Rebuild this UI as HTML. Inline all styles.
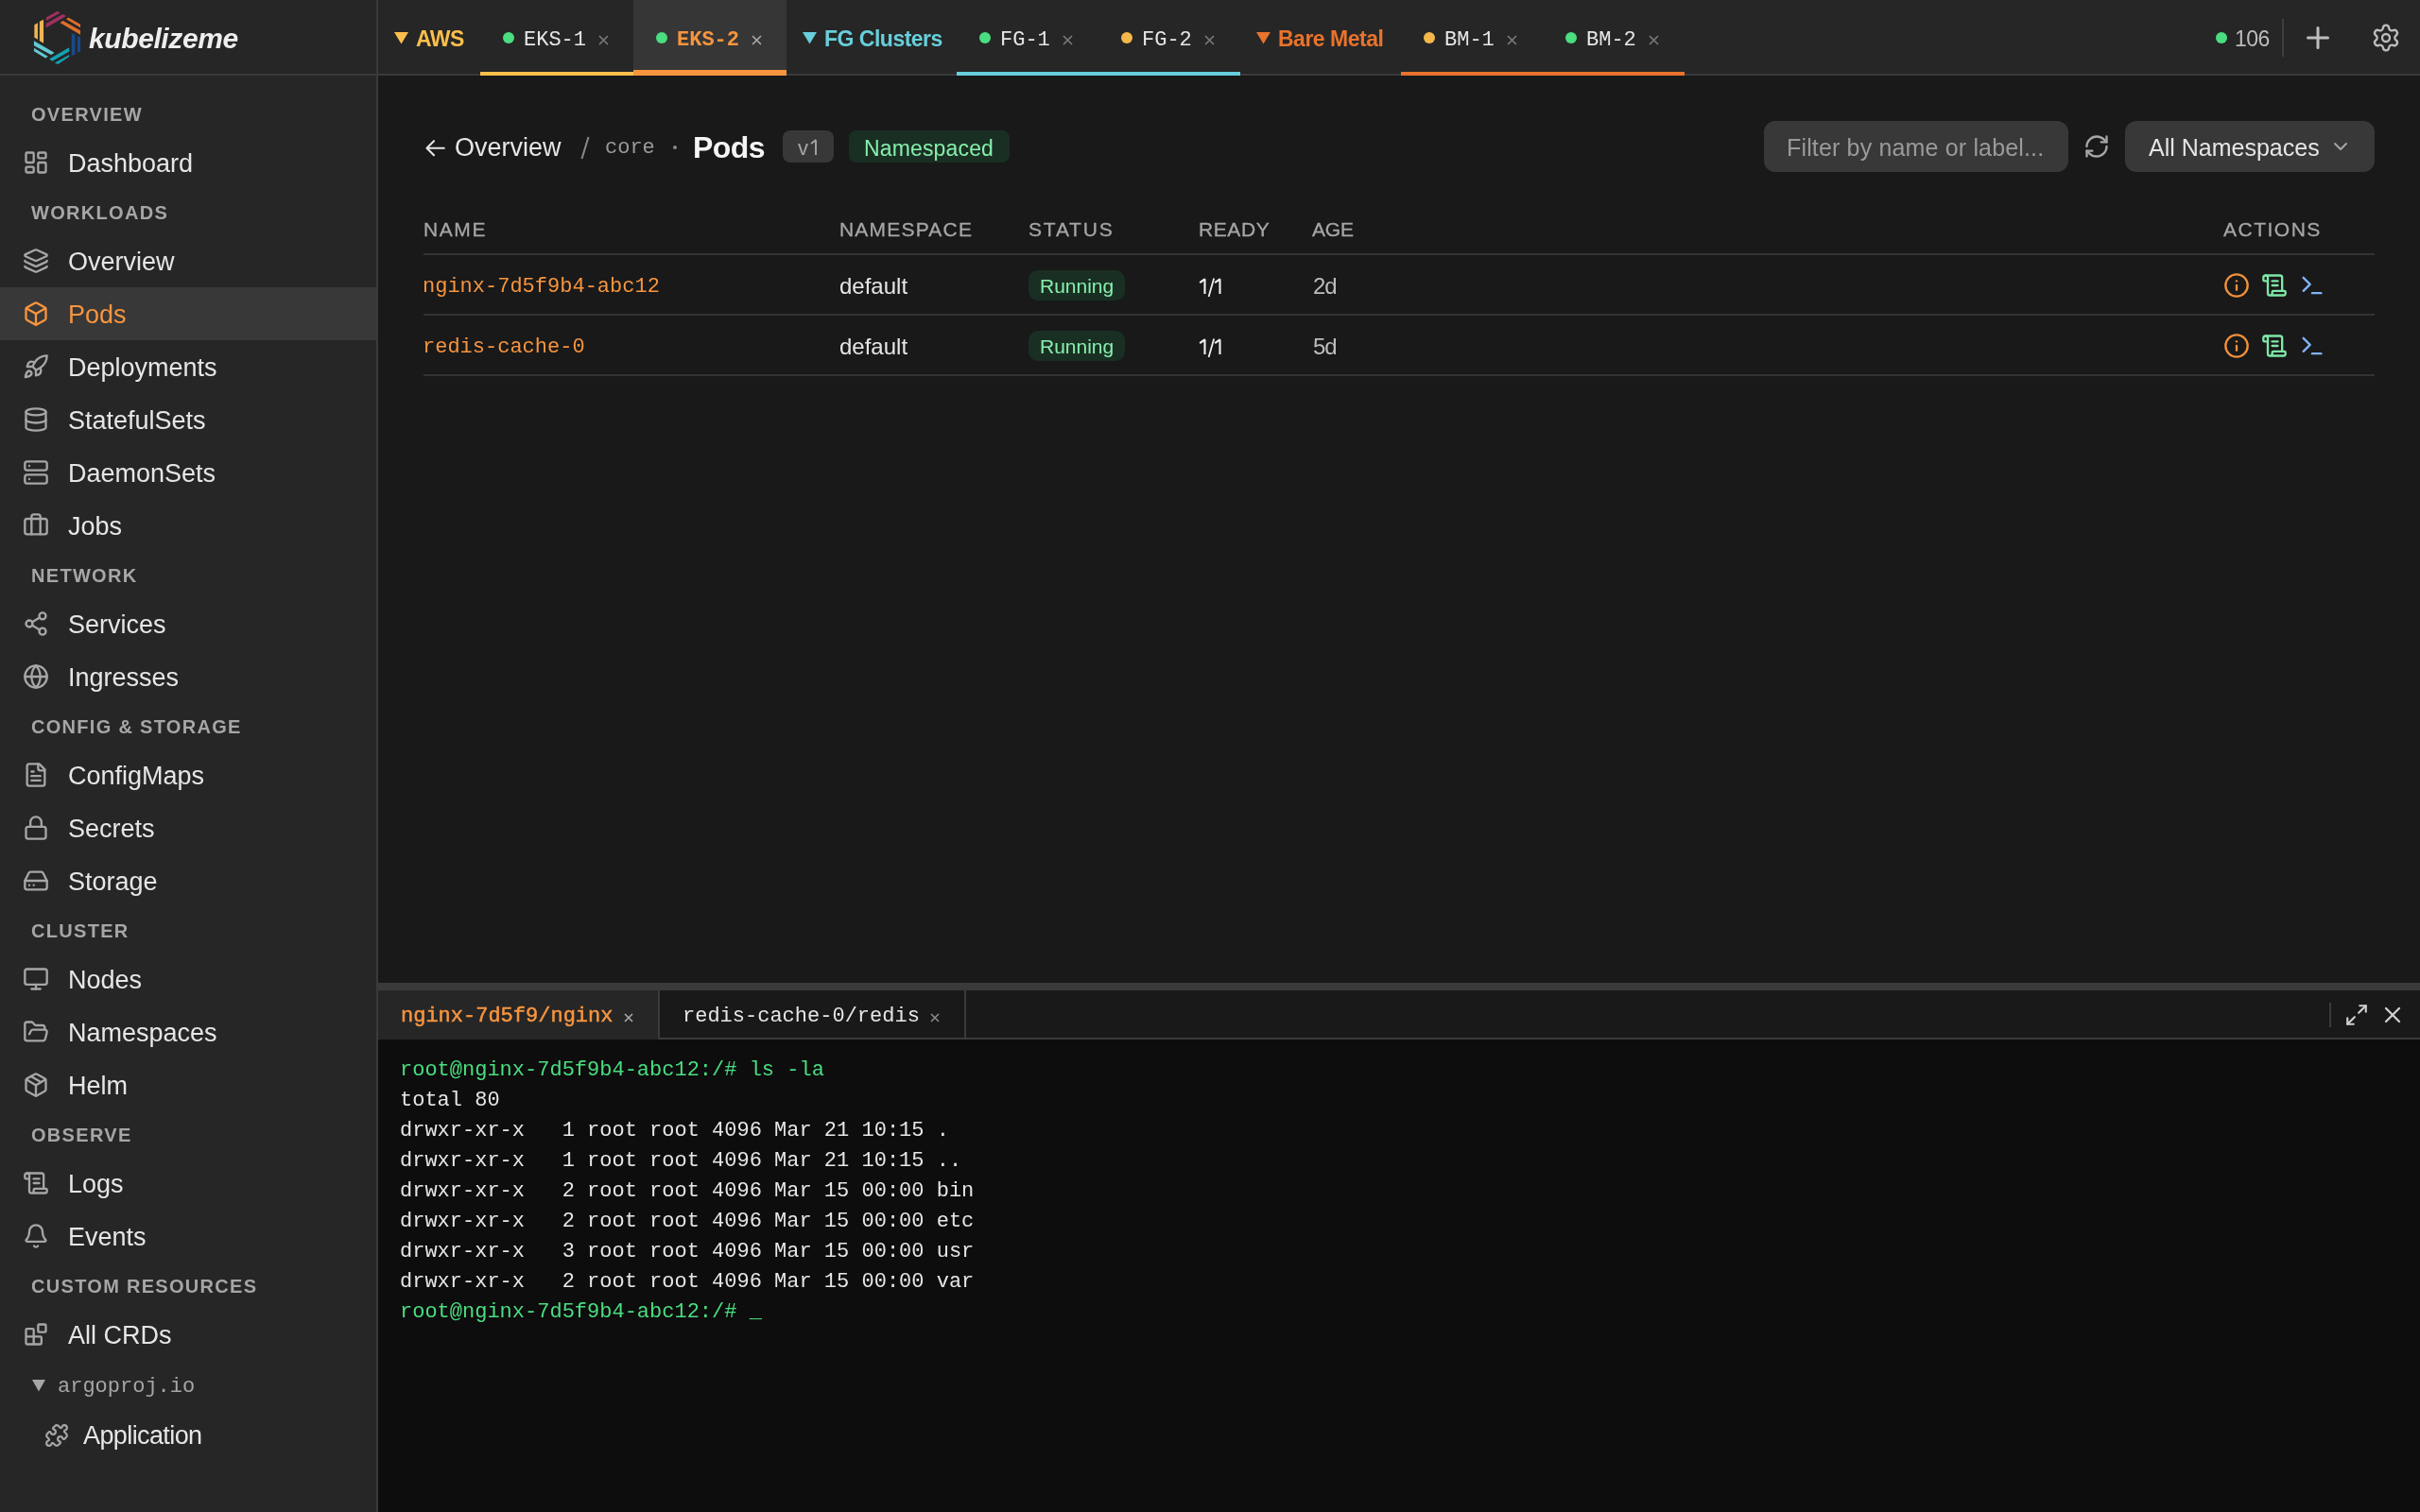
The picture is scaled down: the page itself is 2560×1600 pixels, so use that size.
<!DOCTYPE html>
<html><head><meta charset="utf-8"><title>kubelizeme</title>
<style>
html,body{margin:0;padding:0;width:2560px;height:1600px;overflow:hidden;background:#191919;}
body>div,body>svg{position:absolute;}
.t{white-space:pre;}
body{-webkit-font-smoothing:antialiased;}
.t{will-change:transform;}
</style></head><body>
<div style="left:0px;top:0px;width:2560px;height:1600px;background:#191919;"></div>
<div style="left:0px;top:0px;width:398px;height:1600px;background:#262626;"></div>
<div style="left:398px;top:0px;width:2px;height:1600px;background:#3a3a3a;"></div>
<div style="left:400px;top:0px;width:2160px;height:78px;background:#262626;"></div>
<div style="left:0px;top:78px;width:2560px;height:2px;background:#3a3a3a;"></div>
<div style="left:0px;top:0px;width:398px;height:78px;background:#262626;"></div>
<svg style="left:30px;top:8px" width="62" height="64" viewBox="0 0 1465 1512"><polygon fill="#f0b451" points="150,430 235,385 235,800 150,750"/><polygon fill="#f0b451" points="280,350 380,300 380,890 280,830"/><polygon fill="#a0305f" points="445,250 720,95 800,130 445,330"/><polygon fill="#a0305f" points="440,400 860,165 945,215 440,510"/><polygon fill="#e06e2c" points="945,290 1000,250 1300,420 1300,500"/><polygon fill="#e06e2c" points="790,380 870,330 1300,570 1300,680"/><polygon fill="#174a8a" points="1080,640 1170,680 1170,1170 1080,1210"/><polygon fill="#174a8a" points="1225,710 1300,745 1300,1100 1225,1130"/><polygon fill="#14a3b2" points="520,1290 1020,1000 1020,1100 600,1340"/><polygon fill="#14a3b2" points="660,1380 1020,1180 1020,1230 740,1420"/><polygon fill="#62cad3" points="140,830 650,1130 570,1180 140,950"/><polygon fill="#62cad3" points="140,1010 490,1220 430,1265 140,1090"/></svg>
<div class="t" style="left:94px;top:26px;font-family:'Liberation Sans', sans-serif;font-size:30px;line-height:30px;color:#eeeeee;font-weight:700;letter-spacing:-0.4px;font-style:italic;">kubelizeme</div>
<svg style="left:416.5px;top:34px" width="15" height="12.5" viewBox="0 0 15 12.5"><polygon fill="#fbbf4b" points="0,0 15,0 7.5,12.5"/></svg>
<div class="t" style="left:440px;top:30px;font-family:'Liberation Sans', sans-serif;font-size:23px;line-height:23px;color:#fbbf4b;font-weight:700;letter-spacing:-0.5px;">AWS</div>
<div style="left:532.0px;top:34.0px;width:12px;height:12px;border-radius:50%;background:#4ade80"></div>
<div class="t" style="left:554px;top:32px;font-family:'Liberation Mono', monospace;font-size:22px;line-height:22px;color:#e6e6e6;">EKS-1</div>
<svg style="left:633.0px;top:37px" width="11" height="11" viewBox="0 0 11 11" stroke="#7a7a7a" stroke-width="1.6"><path d="M1 1L10 10M10 1L1 10"/></svg>
<div style="left:508px;top:76px;width:162px;height:4px;background:#fbbf4b;"></div>
<div style="left:670px;top:0px;width:162px;height:78px;background:#363636;"></div>
<div style="left:694.0px;top:34.0px;width:12px;height:12px;border-radius:50%;background:#4ade80"></div>
<div class="t" style="left:716px;top:32px;font-family:'Liberation Mono', monospace;font-size:22px;line-height:22px;color:#f7953f;font-weight:700;">EKS-2</div>
<svg style="left:795.0px;top:37px" width="11" height="11" viewBox="0 0 11 11" stroke="#aaaaaa" stroke-width="1.6"><path d="M1 1L10 10M10 1L1 10"/></svg>
<div style="left:670px;top:74px;width:162px;height:6px;background:#f7953f;"></div>
<svg style="left:848.5px;top:34px" width="15" height="12.5" viewBox="0 0 15 12.5"><polygon fill="#67cfdb" points="0,0 15,0 7.5,12.5"/></svg>
<div class="t" style="left:872px;top:30px;font-family:'Liberation Sans', sans-serif;font-size:23px;line-height:23px;color:#67cfdb;font-weight:700;letter-spacing:-0.5px;">FG Clusters</div>
<div style="left:1036.0px;top:34.0px;width:12px;height:12px;border-radius:50%;background:#4ade80"></div>
<div class="t" style="left:1058px;top:32px;font-family:'Liberation Mono', monospace;font-size:22px;line-height:22px;color:#e6e6e6;">FG-1</div>
<svg style="left:1123.8px;top:37px" width="11" height="11" viewBox="0 0 11 11" stroke="#7a7a7a" stroke-width="1.6"><path d="M1 1L10 10M10 1L1 10"/></svg>
<div style="left:1012px;top:76px;width:150px;height:4px;background:#67cfdb;"></div>
<div style="left:1186.0px;top:34.0px;width:12px;height:12px;border-radius:50%;background:#f5b84b"></div>
<div class="t" style="left:1208px;top:32px;font-family:'Liberation Mono', monospace;font-size:22px;line-height:22px;color:#e6e6e6;">FG-2</div>
<svg style="left:1273.8px;top:37px" width="11" height="11" viewBox="0 0 11 11" stroke="#7a7a7a" stroke-width="1.6"><path d="M1 1L10 10M10 1L1 10"/></svg>
<div style="left:1162px;top:76px;width:150px;height:4px;background:#67cfdb;"></div>
<svg style="left:1328.5px;top:34px" width="15" height="12.5" viewBox="0 0 15 12.5"><polygon fill="#e8732c" points="0,0 15,0 7.5,12.5"/></svg>
<div class="t" style="left:1352px;top:30px;font-family:'Liberation Sans', sans-serif;font-size:23px;line-height:23px;color:#e8732c;font-weight:700;letter-spacing:-0.5px;">Bare Metal</div>
<div style="left:1506.0px;top:34.0px;width:12px;height:12px;border-radius:50%;background:#f5b84b"></div>
<div class="t" style="left:1528px;top:32px;font-family:'Liberation Mono', monospace;font-size:22px;line-height:22px;color:#e6e6e6;">BM-1</div>
<svg style="left:1593.8px;top:37px" width="11" height="11" viewBox="0 0 11 11" stroke="#7a7a7a" stroke-width="1.6"><path d="M1 1L10 10M10 1L1 10"/></svg>
<div style="left:1482px;top:76px;width:150px;height:4px;background:#e8732c;"></div>
<div style="left:1656.0px;top:34.0px;width:12px;height:12px;border-radius:50%;background:#4ade80"></div>
<div class="t" style="left:1678px;top:32px;font-family:'Liberation Mono', monospace;font-size:22px;line-height:22px;color:#e6e6e6;">BM-2</div>
<svg style="left:1743.8px;top:37px" width="11" height="11" viewBox="0 0 11 11" stroke="#7a7a7a" stroke-width="1.6"><path d="M1 1L10 10M10 1L1 10"/></svg>
<div style="left:1632px;top:76px;width:150px;height:4px;background:#e8732c;"></div>
<div style="left:2344.0px;top:34.0px;width:12px;height:12px;border-radius:50%;background:#4ade80"></div>
<div class="t" style="left:2364px;top:30px;font-family:'Liberation Sans', sans-serif;font-size:23px;line-height:23px;color:#bdbdbd;letter-spacing:-0.6px;">106</div>
<div style="left:2414px;top:20px;width:2px;height:40px;background:#3e3e3e;"></div>
<svg style="left:2434.0px;top:22.0px;" width="36" height="36" viewBox="0 0 24 24" fill="none" stroke="#bdbdbd" stroke-width="2" stroke-linecap="round" stroke-linejoin="round"><path d="M5 12h14"/><path d="M12 5v14"/></svg>
<svg style="left:2508.0px;top:23.799999999999997px;" width="32" height="32" viewBox="0 0 24 24" fill="none" stroke="#bdbdbd" stroke-width="1.75" stroke-linecap="round" stroke-linejoin="round"><path d="M9.671 4.136a2.34 2.34 0 0 1 4.659 0 2.34 2.34 0 0 0 3.319 1.915 2.34 2.34 0 0 1 2.33 4.033 2.34 2.34 0 0 0 0 3.831 2.34 2.34 0 0 1-2.33 4.033 2.34 2.34 0 0 0-3.319 1.915 2.34 2.34 0 0 1-4.659 0 2.34 2.34 0 0 0-3.32-1.915 2.34 2.34 0 0 1-2.33-4.033 2.34 2.34 0 0 0 0-3.831A2.34 2.34 0 0 1 6.35 6.051a2.34 2.34 0 0 0 3.319-1.915"/><circle cx="12" cy="12" r="3"/></svg>
<div class="t" style="left:33px;top:111px;font-family:'Liberation Sans', sans-serif;font-size:20px;line-height:20px;color:#a6a6a6;font-weight:700;letter-spacing:1.3px;">OVERVIEW</div>
<div class="t" style="left:33px;top:215px;font-family:'Liberation Sans', sans-serif;font-size:20px;line-height:20px;color:#a6a6a6;font-weight:700;letter-spacing:1.3px;">WORKLOADS</div>
<div class="t" style="left:33px;top:599px;font-family:'Liberation Sans', sans-serif;font-size:20px;line-height:20px;color:#a6a6a6;font-weight:700;letter-spacing:1.3px;">NETWORK</div>
<div class="t" style="left:33px;top:759px;font-family:'Liberation Sans', sans-serif;font-size:20px;line-height:20px;color:#a6a6a6;font-weight:700;letter-spacing:1.3px;">CONFIG &amp; STORAGE</div>
<div class="t" style="left:33px;top:975px;font-family:'Liberation Sans', sans-serif;font-size:20px;line-height:20px;color:#a6a6a6;font-weight:700;letter-spacing:1.3px;">CLUSTER</div>
<div class="t" style="left:33px;top:1191px;font-family:'Liberation Sans', sans-serif;font-size:20px;line-height:20px;color:#a6a6a6;font-weight:700;letter-spacing:1.3px;">OBSERVE</div>
<div class="t" style="left:33px;top:1351px;font-family:'Liberation Sans', sans-serif;font-size:20px;line-height:20px;color:#a6a6a6;font-weight:700;letter-spacing:1.3px;">CUSTOM RESOURCES</div>
<svg style="left:24.0px;top:158.0px;" width="28" height="28" viewBox="0 0 24 24" fill="none" stroke="#a6a6a6" stroke-width="2" stroke-linecap="round" stroke-linejoin="round"><rect x="3" y="3" width="7" height="9" rx="1"/><rect x="14" y="3" width="7" height="5" rx="1"/><rect x="14" y="12" width="7" height="9" rx="1"/><rect x="3" y="16" width="7" height="5" rx="1"/></svg>
<div class="t" style="left:72px;top:160px;font-family:'Liberation Sans', sans-serif;font-size:27px;line-height:27px;color:#e6e6e6;">Dashboard</div>
<svg style="left:24.0px;top:262.0px;" width="28" height="28" viewBox="0 0 24 24" fill="none" stroke="#a6a6a6" stroke-width="2" stroke-linecap="round" stroke-linejoin="round"><path d="M12.83 2.18a2 2 0 0 0-1.66 0L2.6 6.08a1 1 0 0 0 0 1.83l8.58 3.91a2 2 0 0 0 1.66 0l8.58-3.9a1 1 0 0 0 0-1.83z"/><path d="M2 12a1 1 0 0 0 .58.91l8.6 3.91a2 2 0 0 0 1.65 0l8.58-3.9A1 1 0 0 0 22 12"/><path d="M2 17a1 1 0 0 0 .58.91l8.6 3.91a2 2 0 0 0 1.65 0l8.58-3.9A1 1 0 0 0 22 17"/></svg>
<div class="t" style="left:72px;top:264px;font-family:'Liberation Sans', sans-serif;font-size:27px;line-height:27px;color:#e6e6e6;">Overview</div>
<div style="left:0px;top:304px;width:398px;height:56px;background:#383838;"></div>
<svg style="left:24.0px;top:318.0px;" width="28" height="28" viewBox="0 0 24 24" fill="none" stroke="#f7953f" stroke-width="2" stroke-linecap="round" stroke-linejoin="round"><path d="M21 8a2 2 0 0 0-1-1.73l-7-4a2 2 0 0 0-2 0l-7 4A2 2 0 0 0 3 8v8a2 2 0 0 0 1 1.73l7 4a2 2 0 0 0 2 0l7-4A2 2 0 0 0 21 16Z"/><path d="m3.3 7 8.7 5 8.7-5"/><path d="M12 22V12"/></svg>
<div class="t" style="left:72px;top:320px;font-family:'Liberation Sans', sans-serif;font-size:27px;line-height:27px;color:#f7953f;">Pods</div>
<svg style="left:24.0px;top:374.0px;" width="28" height="28" viewBox="0 0 24 24" fill="none" stroke="#a6a6a6" stroke-width="2" stroke-linecap="round" stroke-linejoin="round"><path d="M4.5 16.5c-1.5 1.26-2 5-2 5s3.74-.5 5-2c.71-.84.7-2.13-.09-2.91a2.18 2.18 0 0 0-2.91-.09z"/><path d="m12 15-3-3a22 22 0 0 1 2-3.95A12.88 12.88 0 0 1 22 2c0 2.72-.78 7.5-6 11a22.350 22.35 0 0 1-4 2z"/><path d="M9 12H4s.55-3.03 2-4c1.62-1.08 5 0 5 0"/><path d="M12 15v5s3.03-.55 4-2c1.08-1.62 0-5 0-5"/></svg>
<div class="t" style="left:72px;top:376px;font-family:'Liberation Sans', sans-serif;font-size:27px;line-height:27px;color:#e6e6e6;">Deployments</div>
<svg style="left:24.0px;top:430.0px;" width="28" height="28" viewBox="0 0 24 24" fill="none" stroke="#a6a6a6" stroke-width="2" stroke-linecap="round" stroke-linejoin="round"><ellipse cx="12" cy="5" rx="9" ry="3"/><path d="M3 5V19A9 3 0 0 0 21 19V5"/><path d="M3 12A9 3 0 0 0 21 12"/></svg>
<div class="t" style="left:72px;top:432px;font-family:'Liberation Sans', sans-serif;font-size:27px;line-height:27px;color:#e6e6e6;">StatefulSets</div>
<svg style="left:24.0px;top:486.0px;" width="28" height="28" viewBox="0 0 24 24" fill="none" stroke="#a6a6a6" stroke-width="2" stroke-linecap="round" stroke-linejoin="round"><rect x="2" y="2" width="20" height="8" rx="2"/><rect x="2" y="14" width="20" height="8" rx="2"/><path d="M6 6h.01"/><path d="M6 18h.01"/></svg>
<div class="t" style="left:72px;top:488px;font-family:'Liberation Sans', sans-serif;font-size:27px;line-height:27px;color:#e6e6e6;">DaemonSets</div>
<svg style="left:24.0px;top:542.0px;" width="28" height="28" viewBox="0 0 24 24" fill="none" stroke="#a6a6a6" stroke-width="2" stroke-linecap="round" stroke-linejoin="round"><path d="M16 20V4a2 2 0 0 0-2-2h-4a2 2 0 0 0-2 2v16"/><rect x="2" y="6" width="20" height="14" rx="2"/></svg>
<div class="t" style="left:72px;top:544px;font-family:'Liberation Sans', sans-serif;font-size:27px;line-height:27px;color:#e6e6e6;">Jobs</div>
<svg style="left:24.0px;top:646.0px;" width="28" height="28" viewBox="0 0 24 24" fill="none" stroke="#a6a6a6" stroke-width="2" stroke-linecap="round" stroke-linejoin="round"><circle cx="18" cy="5" r="3"/><circle cx="6" cy="12" r="3"/><circle cx="18" cy="19" r="3"/><path d="M8.59 13.51 15.42 17.49"/><path d="M15.41 6.51 8.59 10.49"/></svg>
<div class="t" style="left:72px;top:648px;font-family:'Liberation Sans', sans-serif;font-size:27px;line-height:27px;color:#e6e6e6;">Services</div>
<svg style="left:24.0px;top:702.0px;" width="28" height="28" viewBox="0 0 24 24" fill="none" stroke="#a6a6a6" stroke-width="2" stroke-linecap="round" stroke-linejoin="round"><circle cx="12" cy="12" r="10"/><path d="M12 2a14.5 14.5 0 0 0 0 20 14.5 14.5 0 0 0 0-20"/><path d="M2 12h20"/></svg>
<div class="t" style="left:72px;top:704px;font-family:'Liberation Sans', sans-serif;font-size:27px;line-height:27px;color:#e6e6e6;">Ingresses</div>
<svg style="left:24.0px;top:806.0px;" width="28" height="28" viewBox="0 0 24 24" fill="none" stroke="#a6a6a6" stroke-width="2" stroke-linecap="round" stroke-linejoin="round"><path d="M15 2H6a2 2 0 0 0-2 2v16a2 2 0 0 0 2 2h12a2 2 0 0 0 2-2V7Z"/><path d="M14 2v4a2 2 0 0 0 2 2h4"/><path d="M10 9H8"/><path d="M16 13H8"/><path d="M16 17H8"/></svg>
<div class="t" style="left:72px;top:808px;font-family:'Liberation Sans', sans-serif;font-size:27px;line-height:27px;color:#e6e6e6;">ConfigMaps</div>
<svg style="left:24.0px;top:862.0px;" width="28" height="28" viewBox="0 0 24 24" fill="none" stroke="#a6a6a6" stroke-width="2" stroke-linecap="round" stroke-linejoin="round"><rect x="3" y="11" width="18" height="11" rx="2"/><path d="M7 11V7a5 5 0 0 1 10 0v4"/></svg>
<div class="t" style="left:72px;top:864px;font-family:'Liberation Sans', sans-serif;font-size:27px;line-height:27px;color:#e6e6e6;">Secrets</div>
<svg style="left:24.0px;top:918.0px;" width="28" height="28" viewBox="0 0 24 24" fill="none" stroke="#a6a6a6" stroke-width="2" stroke-linecap="round" stroke-linejoin="round"><path d="M22 12H2"/><path d="M5.45 5.11 2 12v6a2 2 0 0 0 2 2h16a2 2 0 0 0 2-2v-6l-3.45-6.89A2 2 0 0 0 16.76 4H7.24a2 2 0 0 0-1.79 1.11z"/><path d="M6 16h.01"/><path d="M10 16h.01"/></svg>
<div class="t" style="left:72px;top:920px;font-family:'Liberation Sans', sans-serif;font-size:27px;line-height:27px;color:#e6e6e6;">Storage</div>
<svg style="left:24.0px;top:1022.0px;" width="28" height="28" viewBox="0 0 24 24" fill="none" stroke="#a6a6a6" stroke-width="2" stroke-linecap="round" stroke-linejoin="round"><rect x="2" y="3" width="20" height="14" rx="2"/><path d="M8 21h8"/><path d="M12 17v4"/></svg>
<div class="t" style="left:72px;top:1024px;font-family:'Liberation Sans', sans-serif;font-size:27px;line-height:27px;color:#e6e6e6;">Nodes</div>
<svg style="left:24.0px;top:1078.0px;" width="28" height="28" viewBox="0 0 24 24" fill="none" stroke="#a6a6a6" stroke-width="2" stroke-linecap="round" stroke-linejoin="round"><path d="m6 14 1.5-2.9A2 2 0 0 1 9.24 10H20a2 2 0 0 1 1.94 2.5l-1.54 6a2 2 0 0 1-1.95 1.5H4a2 2 0 0 1-2-2V5a2 2 0 0 1 2-2h3.9a2 2 0 0 1 1.69.9l.81 1.2a2 2 0 0 0 1.67.9H18a2 2 0 0 1 2 2v2"/></svg>
<div class="t" style="left:72px;top:1080px;font-family:'Liberation Sans', sans-serif;font-size:27px;line-height:27px;color:#e6e6e6;">Namespaces</div>
<svg style="left:24.0px;top:1134.0px;" width="28" height="28" viewBox="0 0 24 24" fill="none" stroke="#a6a6a6" stroke-width="2" stroke-linecap="round" stroke-linejoin="round"><path d="M11 21.73a2 2 0 0 0 2 0l7-4A2 2 0 0 0 21 16V8a2 2 0 0 0-1-1.73l-7-4a2 2 0 0 0-2 0l-7 4A2 2 0 0 0 3 8v8a2 2 0 0 0 1 1.73z"/><path d="M12 22V12"/><path d="m3.3 7 7.703 4.734a2 2 0 0 0 1.994 0L20.7 7"/><path d="m7.5 4.27 9 5.15"/></svg>
<div class="t" style="left:72px;top:1136px;font-family:'Liberation Sans', sans-serif;font-size:27px;line-height:27px;color:#e6e6e6;">Helm</div>
<svg style="left:24.0px;top:1238.0px;" width="28" height="28" viewBox="0 0 24 24" fill="none" stroke="#a6a6a6" stroke-width="2" stroke-linecap="round" stroke-linejoin="round"><path d="M15 12h-5"/><path d="M15 8h-5"/><path d="M19 17V5a2 2 0 0 0-2-2H4"/><path d="M8 21h12a2 2 0 0 0 2-2v-1a1 1 0 0 0-1-1H11a1 1 0 0 0-1 1v1a2 2 0 1 1-4 0V5a2 2 0 1 0-4 0v2a1 1 0 0 0 1 1h3"/></svg>
<div class="t" style="left:72px;top:1240px;font-family:'Liberation Sans', sans-serif;font-size:27px;line-height:27px;color:#e6e6e6;">Logs</div>
<svg style="left:24.0px;top:1294.0px;" width="28" height="28" viewBox="0 0 24 24" fill="none" stroke="#a6a6a6" stroke-width="2" stroke-linecap="round" stroke-linejoin="round"><path d="M10.268 21a2 2 0 0 0 3.464 0"/><path d="M3.262 15.326A1 1 0 0 0 4 17h16a1 1 0 0 0 .74-1.673C19.41 13.956 18 12.499 18 8A6 6 0 0 0 6 8c0 4.499-1.411 5.956-2.738 7.326"/></svg>
<div class="t" style="left:72px;top:1296px;font-family:'Liberation Sans', sans-serif;font-size:27px;line-height:27px;color:#e6e6e6;">Events</div>
<svg style="left:24.0px;top:1398.0px;" width="28" height="28" viewBox="0 0 24 24" fill="none" stroke="#a6a6a6" stroke-width="2" stroke-linecap="round" stroke-linejoin="round"><rect x="14" y="3" width="7" height="7" rx="1"/><path d="M10 21V8a1 1 0 0 0-1-1H4a1 1 0 0 0-1 1v12a1 1 0 0 0 1 1h12a1 1 0 0 0 1-1v-5a1 1 0 0 0-1-1H3"/></svg>
<div class="t" style="left:72px;top:1400px;font-family:'Liberation Sans', sans-serif;font-size:27px;line-height:27px;color:#e6e6e6;">All CRDs</div>
<svg style="left:33.5px;top:1460px" width="14" height="12.5" viewBox="0 0 14 12.5"><polygon fill="#a6a6a6" points="0,0 14,0 7.0,12.5"/></svg>
<div class="t" style="left:61px;top:1457px;font-family:'Liberation Mono', monospace;font-size:22px;line-height:22px;color:#a6a6a6;">argoproj.io</div>
<svg style="left:46.5px;top:1505.5px;" width="26" height="26" viewBox="0 0 24 24" fill="none" stroke="#a6a6a6" stroke-width="2" stroke-linecap="round" stroke-linejoin="round"><path d="M15.39 4.39a1 1 0 0 0 1.68-.474 2.5 2.5 0 1 1 3.014 3.015 1 1 0 0 0-.474 1.68l1.683 1.682a2.414 2.414 0 0 1 0 3.414L19.61 15.39a1 1 0 0 1-1.68-.474 2.5 2.5 0 1 0-3.014 3.015 1 1 0 0 1 .474 1.68l-1.683 1.682a2.414 2.414 0 0 1-3.414 0L8.61 19.61a1 1 0 0 0-1.68.474 2.5 2.5 0 1 1-3.014-3.015 1 1 0 0 0 .474-1.68l-1.683-1.682a2.414 2.414 0 0 1 0-3.414L4.39 8.61a1 1 0 0 1 1.68.474 2.5 2.5 0 1 0 3.014-3.015 1 1 0 0 1-.474-1.68l1.683-1.682a2.414 2.414 0 0 1 3.414 0z"/></svg>
<div class="t" style="left:88px;top:1506px;font-family:'Liberation Sans', sans-serif;font-size:27px;line-height:27px;color:#e6e6e6;letter-spacing:-0.6px;">Application</div>
<svg style="left:448px;top:146px" width="26" height="22" viewBox="0 0 26 22" fill="none" stroke="#e6e6e6" stroke-width="2.1" stroke-linecap="round" stroke-linejoin="round"><path d="M3.5 10.7H21.8M3.5 10.7L11 3.2M3.5 10.7L11 18.2"/></svg>
<div class="t" style="left:481px;top:143px;font-family:'Liberation Sans', sans-serif;font-size:27px;line-height:27px;color:#e6e6e6;">Overview</div>
<svg style="left:612px;top:143px" width="14" height="28" viewBox="0 0 14 28" stroke="#8a8a8a" stroke-width="2"><path d="M10.5 2L3.5 25"/></svg>
<div class="t" style="left:640px;top:146px;font-family:'Liberation Mono', monospace;font-size:22px;line-height:22px;color:#9a9a9a;">core</div>
<div style="left:711.8px;top:153.8px;width:4px;height:4px;border-radius:50%;background:#8a8a8a"></div>
<div class="t" style="left:733px;top:140px;font-family:'Liberation Sans', sans-serif;font-size:32px;line-height:32px;color:#f5f5f5;font-weight:700;letter-spacing:-0.6px;">Pods</div>
<div style="left:828px;top:138px;width:54px;height:34px;background:#383838;border-radius:8px;"></div>
<div class="t" style="left:844px;top:146px;font-family:'Liberation Sans', sans-serif;font-size:22px;line-height:22px;color:#a6a6a6;">v</div>
<svg style="left:855px;top:147px" width="12" height="18" viewBox="0 0 12 18" fill="none" stroke="#a6a6a6" stroke-width="1.9"><path d="M8 1.2V17M8.3 1.1L3 5"/></svg>
<div style="left:898px;top:138px;width:170px;height:34px;background:#1a2f23;border-radius:8px;"></div>
<div class="t" style="left:914px;top:146px;font-family:'Liberation Sans', sans-serif;font-size:23px;line-height:23px;color:#86efac;letter-spacing:0.15px;">Namespaced</div>
<div style="left:1866px;top:128px;width:322px;height:54px;background:#383838;border-radius:12px;"></div>
<div class="t" style="left:1890px;top:144px;font-family:'Liberation Sans', sans-serif;font-size:25px;line-height:25px;color:#9a9a9a;letter-spacing:0.16px;">Filter by name or label...</div>
<svg style="left:2204.3px;top:141.0px;" width="28" height="28" viewBox="0 0 24 24" fill="none" stroke="#a6a6a6" stroke-width="2" stroke-linecap="round" stroke-linejoin="round"><path d="M3 12a9 9 0 0 1 9-9 9.75 9.75 0 0 1 6.74 2.74L21 8"/><path d="M21 3v5h-5"/><path d="M21 12a9 9 0 0 1-9 9 9.75 9.75 0 0 1-6.74-2.74L3 16"/><path d="M8 16H3v5"/></svg>
<div style="left:2248px;top:128px;width:264px;height:54px;background:#383838;border-radius:12px;"></div>
<div class="t" style="left:2273px;top:144px;font-family:'Liberation Sans', sans-serif;font-size:25px;line-height:25px;color:#e6e6e6;">All Namespaces</div>
<svg style="left:2464.0px;top:143.0px;" width="24" height="24" viewBox="0 0 24 24" fill="none" stroke="#a6a6a6" stroke-width="2" stroke-linecap="round" stroke-linejoin="round"><path d="m6 9 6 6 6-6"/></svg>
<div class="t" style="left:448px;top:232px;font-family:'Liberation Sans', sans-serif;font-size:21px;line-height:21px;color:#a6a6a6;letter-spacing:1.6px;-webkit-text-stroke:0.3px #a6a6a6;">NAME</div>
<div class="t" style="left:888px;top:232px;font-family:'Liberation Sans', sans-serif;font-size:21px;line-height:21px;color:#a6a6a6;letter-spacing:1.2px;-webkit-text-stroke:0.3px #a6a6a6;">NAMESPACE</div>
<div class="t" style="left:1088px;top:232px;font-family:'Liberation Sans', sans-serif;font-size:21px;line-height:21px;color:#a6a6a6;letter-spacing:1.8px;-webkit-text-stroke:0.3px #a6a6a6;">STATUS</div>
<div class="t" style="left:1268px;top:232px;font-family:'Liberation Sans', sans-serif;font-size:21px;line-height:21px;color:#a6a6a6;letter-spacing:0.6px;-webkit-text-stroke:0.3px #a6a6a6;">READY</div>
<div class="t" style="left:1388px;top:232px;font-family:'Liberation Sans', sans-serif;font-size:21px;line-height:21px;color:#a6a6a6;letter-spacing:-0.2px;-webkit-text-stroke:0.3px #a6a6a6;">AGE</div>
<div class="t" style="left:2352px;top:232px;font-family:'Liberation Sans', sans-serif;font-size:21px;line-height:21px;color:#a6a6a6;letter-spacing:1.5px;-webkit-text-stroke:0.3px #a6a6a6;">ACTIONS</div>
<div style="left:448px;top:268px;width:2064px;height:2px;background:#333333;"></div>
<div style="left:448px;top:332px;width:2064px;height:2px;background:#333333;"></div>
<div style="left:448px;top:396px;width:2064px;height:2px;background:#333333;"></div>
<div class="t" style="left:447px;top:293px;font-family:'Liberation Mono', monospace;font-size:22px;line-height:22px;color:#f7953f;">nginx-7d5f9b4-abc12</div>
<div class="t" style="left:888px;top:291px;font-family:'Liberation Sans', sans-serif;font-size:24px;line-height:24px;color:#e6e6e6;">default</div>
<div style="left:1088px;top:286px;width:102px;height:32px;background:#1a2f23;border-radius:10px;"></div>
<div class="t" style="left:1100px;top:292px;font-family:'Liberation Sans', sans-serif;font-size:21px;line-height:21px;color:#86efac;">Running</div>
<svg style="left:1268px;top:294px" width="10" height="18" viewBox="0 0 10 18" fill="none" stroke="#f0f0f0" stroke-width="2.1"><path d="M6.5 1.2V17M6.8 1.1L1.2 5.2"/></svg>
<svg style="left:1284.3px;top:294px" width="10" height="18" viewBox="0 0 10 18" fill="none" stroke="#f0f0f0" stroke-width="2.1"><path d="M6.5 1.2V17M6.8 1.1L1.2 5.2"/></svg>
<svg style="left:1276px;top:293px" width="10" height="22" viewBox="0 0 10 22" stroke="#f0f0f0" stroke-width="1.8"><path d="M8.2 1.5L2.6 21"/></svg>
<div class="t" style="left:1389px;top:291px;font-family:'Liberation Sans', sans-serif;font-size:24px;line-height:24px;color:#bdbdbd;letter-spacing:-1px;">2d</div>
<svg style="left:2352.0px;top:288.0px;" width="28" height="28" viewBox="0 0 24 24" fill="none" stroke="#f0903c" stroke-width="2" stroke-linecap="round" stroke-linejoin="round"><circle cx="12" cy="12" r="10"/><path d="M12 16v-4"/><path d="M12 8h.01"/></svg>
<svg style="left:2392.0px;top:288.0px;" width="28" height="28" viewBox="0 0 24 24" fill="none" stroke="#7ee8a8" stroke-width="2" stroke-linecap="round" stroke-linejoin="round"><path d="M15 12h-5"/><path d="M15 8h-5"/><path d="M19 17V5a2 2 0 0 0-2-2H4"/><path d="M8 21h12a2 2 0 0 0 2-2v-1a1 1 0 0 0-1-1H11a1 1 0 0 0-1 1v1a2 2 0 1 1-4 0V5a2 2 0 1 0-4 0v2a1 1 0 0 0 1 1h3"/></svg>
<svg style="left:2432.0px;top:288.0px;" width="28" height="28" viewBox="0 0 24 24" fill="none" stroke="#80b3f5" stroke-width="2" stroke-linecap="round" stroke-linejoin="round"><path d="m4 17 6-6-6-6"/><path d="M12 19h8"/></svg>
<div class="t" style="left:447px;top:357px;font-family:'Liberation Mono', monospace;font-size:22px;line-height:22px;color:#f7953f;">redis-cache-0</div>
<div class="t" style="left:888px;top:355px;font-family:'Liberation Sans', sans-serif;font-size:24px;line-height:24px;color:#e6e6e6;">default</div>
<div style="left:1088px;top:350px;width:102px;height:32px;background:#1a2f23;border-radius:10px;"></div>
<div class="t" style="left:1100px;top:356px;font-family:'Liberation Sans', sans-serif;font-size:21px;line-height:21px;color:#86efac;">Running</div>
<svg style="left:1268px;top:358px" width="10" height="18" viewBox="0 0 10 18" fill="none" stroke="#f0f0f0" stroke-width="2.1"><path d="M6.5 1.2V17M6.8 1.1L1.2 5.2"/></svg>
<svg style="left:1284.3px;top:358px" width="10" height="18" viewBox="0 0 10 18" fill="none" stroke="#f0f0f0" stroke-width="2.1"><path d="M6.5 1.2V17M6.8 1.1L1.2 5.2"/></svg>
<svg style="left:1276px;top:357px" width="10" height="22" viewBox="0 0 10 22" stroke="#f0f0f0" stroke-width="1.8"><path d="M8.2 1.5L2.6 21"/></svg>
<div class="t" style="left:1389px;top:355px;font-family:'Liberation Sans', sans-serif;font-size:24px;line-height:24px;color:#bdbdbd;letter-spacing:-1px;">5d</div>
<svg style="left:2352.0px;top:352.0px;" width="28" height="28" viewBox="0 0 24 24" fill="none" stroke="#f0903c" stroke-width="2" stroke-linecap="round" stroke-linejoin="round"><circle cx="12" cy="12" r="10"/><path d="M12 16v-4"/><path d="M12 8h.01"/></svg>
<svg style="left:2392.0px;top:352.0px;" width="28" height="28" viewBox="0 0 24 24" fill="none" stroke="#7ee8a8" stroke-width="2" stroke-linecap="round" stroke-linejoin="round"><path d="M15 12h-5"/><path d="M15 8h-5"/><path d="M19 17V5a2 2 0 0 0-2-2H4"/><path d="M8 21h12a2 2 0 0 0 2-2v-1a1 1 0 0 0-1-1H11a1 1 0 0 0-1 1v1a2 2 0 1 1-4 0V5a2 2 0 1 0-4 0v2a1 1 0 0 0 1 1h3"/></svg>
<svg style="left:2432.0px;top:352.0px;" width="28" height="28" viewBox="0 0 24 24" fill="none" stroke="#80b3f5" stroke-width="2" stroke-linecap="round" stroke-linejoin="round"><path d="m4 17 6-6-6-6"/><path d="M12 19h8"/></svg>
<div style="left:400px;top:1040px;width:2160px;height:8px;background:#3a3a3a;"></div>
<div style="left:400px;top:1048px;width:2160px;height:52px;background:#191919;"></div>
<div style="left:400px;top:1098px;width:2160px;height:2px;background:#3a3a3a;"></div>
<div style="left:400px;top:1048px;width:296px;height:52px;background:#262626;"></div>
<div style="left:696px;top:1048px;width:2px;height:52px;background:#3a3a3a;"></div>
<div style="left:1020px;top:1048px;width:2px;height:52px;background:#3a3a3a;"></div>
<div class="t" style="left:424px;top:1065px;font-family:'Liberation Mono', monospace;font-size:22px;line-height:22px;color:#f7953f;-webkit-text-stroke:0.5px #f7953f;">nginx-7d5f9/nginx</div>
<svg style="left:660px;top:1072px" width="10" height="10" viewBox="0 0 10 10" stroke="#aaaaaa" stroke-width="1.6"><path d="M1 1L9 9M9 1L1 9"/></svg>
<div class="t" style="left:722px;top:1065px;font-family:'Liberation Mono', monospace;font-size:22px;line-height:22px;color:#e6e6e6;">redis-cache-0/redis</div>
<svg style="left:984px;top:1072px" width="10" height="10" viewBox="0 0 10 10" stroke="#8a8a8a" stroke-width="1.6"><path d="M1 1L9 9M9 1L1 9"/></svg>
<div style="left:2464px;top:1061px;width:2px;height:26px;background:#3a3a3a;"></div>
<svg style="left:2480.0px;top:1060.9px;" width="26" height="26" viewBox="0 0 24 24" fill="none" stroke="#cfcfcf" stroke-width="2" stroke-linecap="round" stroke-linejoin="round"><path d="M15 3h6v6"/><path d="M9 21H3v-6"/><path d="M21 3l-7 7"/><path d="M3 21l7-7"/></svg>
<svg style="left:2517.0px;top:1060.0px;" width="28" height="28" viewBox="0 0 24 24" fill="none" stroke="#cfcfcf" stroke-width="2" stroke-linecap="round" stroke-linejoin="round"><path d="M18 6 6 18"/><path d="m6 6 12 12"/></svg>
<div style="left:400px;top:1100px;width:2160px;height:500px;background:#0d0d0d;"></div>
<div class="t" style="left:423px;top:1122px;font-family:'Liberation Mono', monospace;font-size:22px;line-height:22px;color:#4ade80;">root@nginx-7d5f9b4-abc12:/# ls -la</div>
<div class="t" style="left:423px;top:1154px;font-family:'Liberation Mono', monospace;font-size:22px;line-height:22px;color:#e6e6e6;">total 80</div>
<div class="t" style="left:423px;top:1186px;font-family:'Liberation Mono', monospace;font-size:22px;line-height:22px;color:#e6e6e6;">drwxr-xr-x   1 root root 4096 Mar 21 10:15 .</div>
<div class="t" style="left:423px;top:1218px;font-family:'Liberation Mono', monospace;font-size:22px;line-height:22px;color:#e6e6e6;">drwxr-xr-x   1 root root 4096 Mar 21 10:15 ..</div>
<div class="t" style="left:423px;top:1250px;font-family:'Liberation Mono', monospace;font-size:22px;line-height:22px;color:#e6e6e6;">drwxr-xr-x   2 root root 4096 Mar 15 00:00 bin</div>
<div class="t" style="left:423px;top:1282px;font-family:'Liberation Mono', monospace;font-size:22px;line-height:22px;color:#e6e6e6;">drwxr-xr-x   2 root root 4096 Mar 15 00:00 etc</div>
<div class="t" style="left:423px;top:1314px;font-family:'Liberation Mono', monospace;font-size:22px;line-height:22px;color:#e6e6e6;">drwxr-xr-x   3 root root 4096 Mar 15 00:00 usr</div>
<div class="t" style="left:423px;top:1346px;font-family:'Liberation Mono', monospace;font-size:22px;line-height:22px;color:#e6e6e6;">drwxr-xr-x   2 root root 4096 Mar 15 00:00 var</div>
<div class="t" style="left:423px;top:1378px;font-family:'Liberation Mono', monospace;font-size:22px;line-height:22px;color:#4ade80;">root@nginx-7d5f9b4-abc12:/# _</div>
</body></html>
